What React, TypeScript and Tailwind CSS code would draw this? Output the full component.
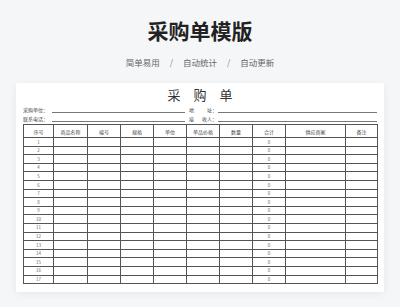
const cols: { label: string; w: number }[] = [
  { label: '序号', w: 30 },
  { label: '商品名称', w: 34 },
  { label: '编号', w: 33 },
  { label: '规格', w: 33 },
  { label: '单位', w: 33 },
  { label: '单品价格', w: 33 },
  { label: '数量', w: 33 },
  { label: '合计', w: 33 },
  { label: '供应商家', w: 60 },
  { label: '备注', w: 32 },
];

const rows = Array.from({ length: 17 }, (_, i) => i + 1);

function InfoField({ label, tail }: { label: string; tail?: string }) {
  return (
    <div className={tail ? 'flex items-end w-[188px]' : 'flex items-end w-[162px]'}>
      {tail ? (
        <span className="w-[29px] pr-[1px] flex justify-between whitespace-nowrap text-[5px] leading-none pb-[1px] text-[#444]">
          <span>{label}</span>
          <span>{tail}</span>
        </span>
      ) : (
        <span className="w-[29px] whitespace-nowrap text-[5px] leading-none pb-[1px] text-[#444]">{label}</span>
      )}
      <div className="flex-1 border-b border-[#777]" />
    </div>
  );
}

export default function App() {
  return (
    <div
      className="w-[400px] h-[307px] bg-[#f5f6f8] flex flex-col items-center overflow-hidden"
      style={{ fontFamily: '"Noto Sans CJK SC", "Noto Sans", sans-serif' }}
    >
      <h1 className="mt-[16px] text-[21px] leading-[28px] font-bold text-[#222]">采购单模版</h1>
      <div className="mt-[13px] flex items-center gap-[10px] text-[8.5px] leading-[10px] text-[#666]">
        <span>简单易用</span>
        <span className="text-[#888]">/</span>
        <span>自动统计</span>
        <span className="text-[#888]">/</span>
        <span>自动更新</span>
      </div>

      <div className="mt-[16px] w-[368px] bg-white px-[7px] pt-[5px] pb-[8px] shadow-[0_2px_8px_rgba(0,0,0,0.06)]">
        <div className="text-center text-[13px] leading-[14px] tracking-[13px] pl-[13px] text-[#333]">采购单</div>

        <div className="flex justify-between h-[11px] items-end">
          <InfoField label="采购单位：" />
          <InfoField label="地" tail="址：" />
        </div>
        <div className="flex justify-between h-[9px] items-end">
          <InfoField label="联系电话：" />
          <InfoField label="接" tail="收人：" />
        </div>

        <table className="mt-[2px] w-[354px] border-collapse table-fixed text-[#555]">
          <colgroup>
            {cols.map((c) => (
              <col key={c.label} style={{ width: c.w }} />
            ))}
          </colgroup>
          <thead>
            <tr className="h-[13px]">
              {cols.map((c) => (
                <th
                  key={c.label}
                  className="border border-[#555] p-0 text-[5px] leading-none font-normal text-[#444]"
                >
                  {c.label}
                </th>
              ))}
            </tr>
          </thead>
          <tbody>
            {rows.map((n) => (
              <tr key={n} className="h-[8.6px]">
                {cols.map((c, i) => (
                  <td
                    key={c.label}
                    className="border border-[#555] p-0 text-center text-[4.5px] leading-none text-[#666]"
                  >
                    {i === 0 ? n : i === 7 ? 0 : ''}
                  </td>
                ))}
              </tr>
            ))}
          </tbody>
        </table>
      </div>
    </div>
  );
}
